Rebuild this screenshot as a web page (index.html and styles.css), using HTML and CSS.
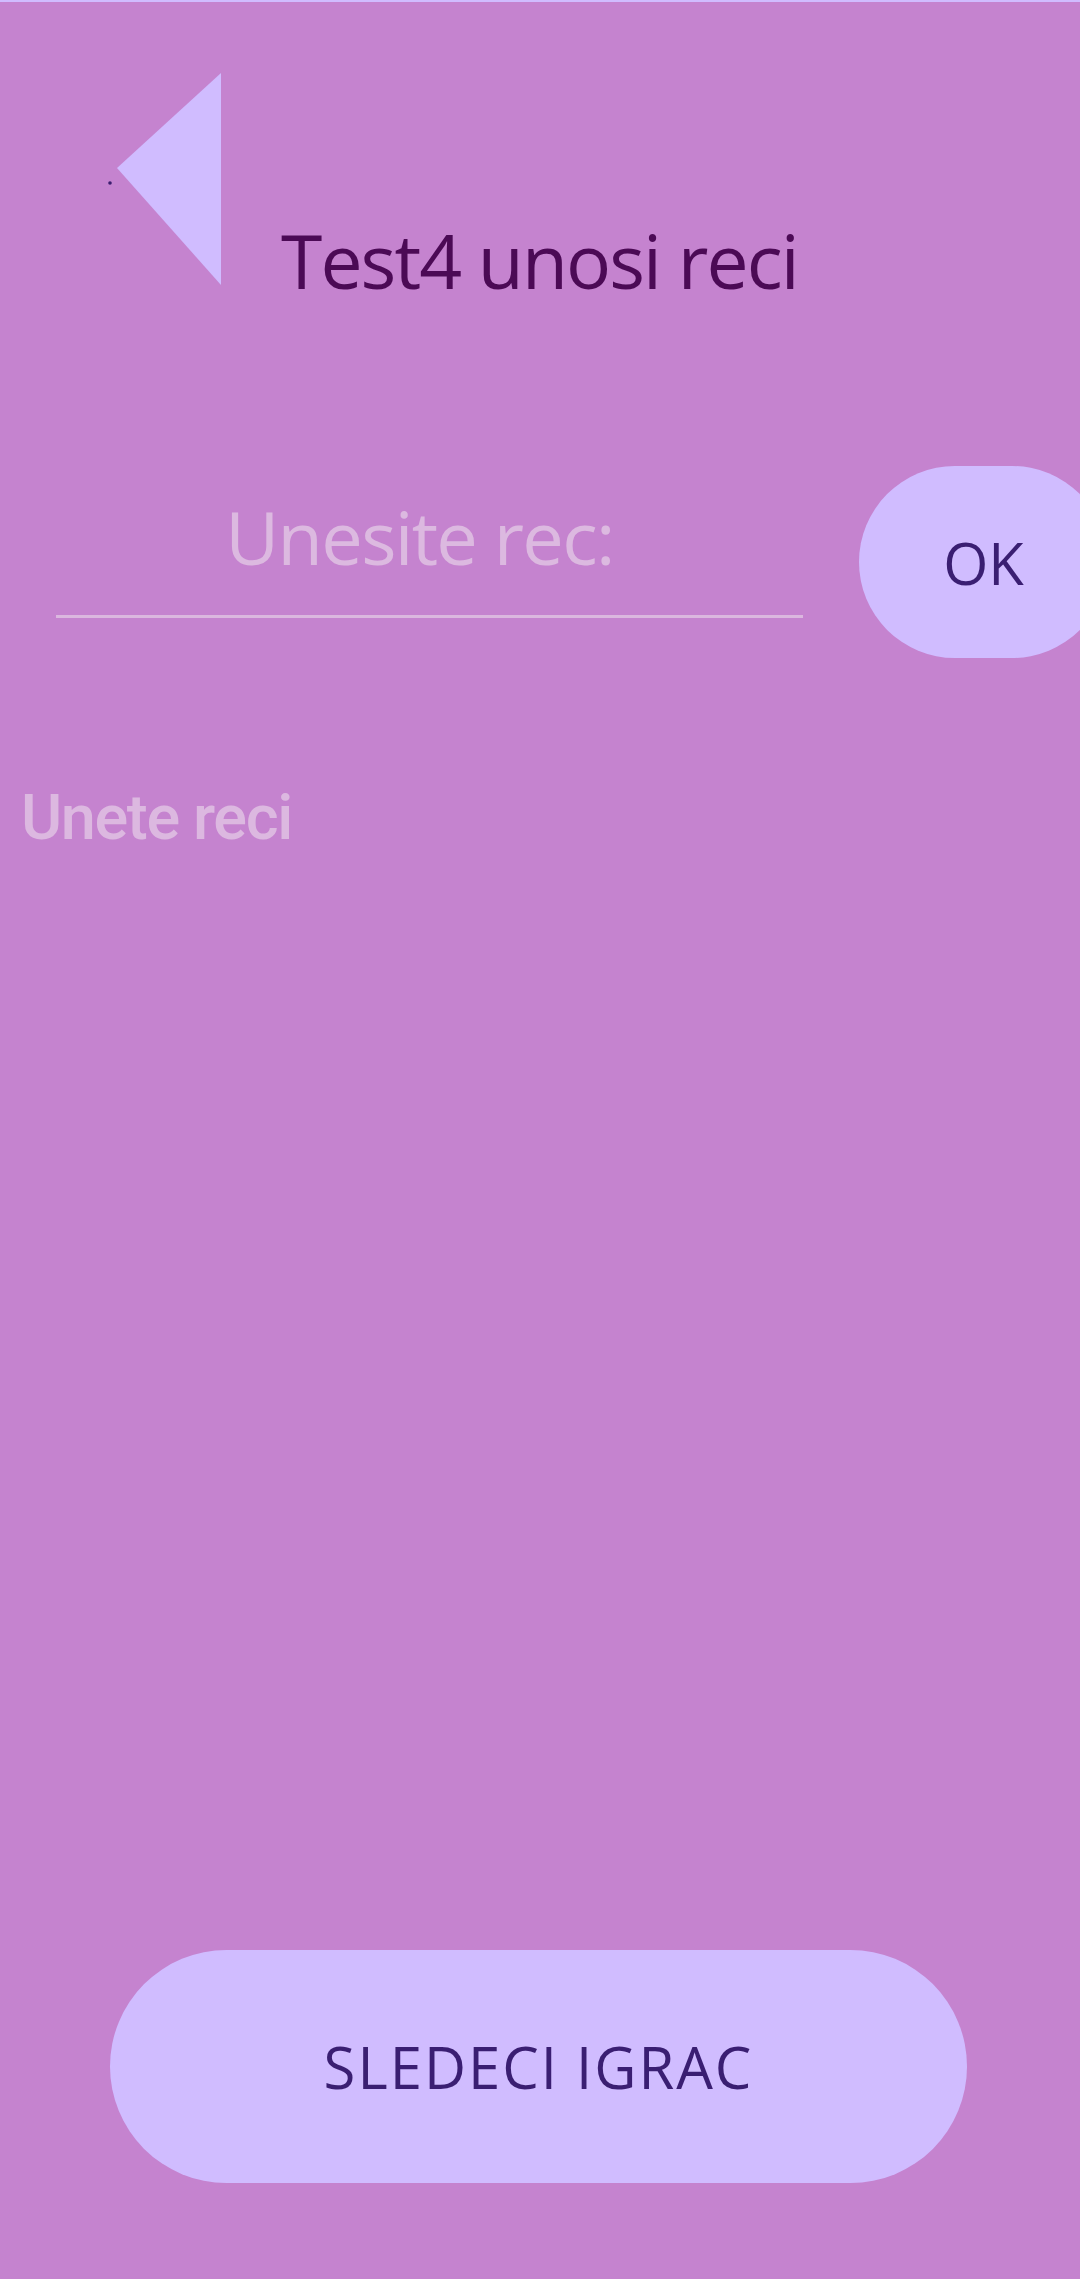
FILE: index.html
```html
<!DOCTYPE html>
<html lang="sr">
<head>
<meta charset="utf-8">
<title>Test4 unosi reci</title>
<link rel="stylesheet" href="styles.css">
</head>
<body>
<div class="screen">
  <div class="topline"></div>
  <header class="header">
    <button class="back" aria-label="Nazad">
      <svg width="115" height="212" viewBox="0 0 115 212">
        <polygon points="11,95 115,0 115,212" fill="#d0bcff"/>
        <circle cx="4" cy="110" r="1.8" fill="#3b1d6e"/>
      </svg>
    </button>
    <h1 class="title">Test4 unosi reci</h1>
  </header>
  <div class="entry">
    <input class="word" type="text" placeholder="Unesite rec:">
    <button class="ok">OK</button>
  </div>
  <h2 class="subtitle">Unete reci</h2>
  <button class="next">SLEDECI IGRAC</button>
</div>
</body>
</html>
```
FILE: styles.css
```css
html, body {
  margin: 0;
  padding: 0;
  background: #c583cf;
  overflow: hidden;
}
.screen {
  display: flex;
  flex-direction: column;
  min-height: 2279px;
  width: 1080px;
  overflow: hidden;
  font-family: "Open Sans", "Noto Sans", sans-serif;
}
.topline {
  height: 2px;
  background: #d0bcff;
}
.header {
  display: flex;
  align-items: flex-start;
  margin-top: 71px;
  height: 212px;
}
.back {
  margin: 0 0 0 106px;
  padding: 0;
  border: none;
  background: none;
  width: 115px;
  height: 212px;
  display: block;
}
.back svg { display: block; }
.title {
  margin: 150px 0 0 60px;
  font-size: 75px;
  line-height: 75px;
  font-weight: 400;
  letter-spacing: -1.9px;
  color: #4b0a55;
  white-space: nowrap;
}
.entry {
  display: flex;
  align-items: flex-start;
  margin-top: 181px;
  margin-left: 56px;
  gap: 56px;
}
.word {
  box-sizing: border-box;
  flex: none;
  width: 747px;
  height: 132px;
  margin-top: 20px;
  padding: 0 20px 28px 0;
  border: none;
  border-bottom: 3px solid #dbb7df;
  background: transparent;
  font-family: "Open Sans", "Noto Sans", sans-serif;
  font-size: 74px;
  letter-spacing: -1.7px;
  color: #4b0a55;
  text-align: center;
  outline: none;
}
.word::placeholder {
  color: #dcb9e0;
  opacity: 1;
}
.ok {
  flex: none;
  width: 249px;
  height: 192px;
  border: none;
  border-radius: 96px;
  background: #d0bcff;
  color: #3a1e72;
  font-family: "Open Sans", "Noto Sans", sans-serif;
  font-size: 58px;
  padding: 0;
}
.subtitle {
  margin: 128px 0 0 21px;
  font-family: Roboto, "Open Sans", sans-serif;
  font-size: 63px;
  line-height: 63px;
  font-weight: 500;
  letter-spacing: -1.4px;
  color: #dcb8e0;
}
.next {
  margin: auto 0 96px 110px;
  width: 857px;
  height: 233px;
  border: none;
  border-radius: 117px;
  background: #d0bcff;
  color: #3a1e72;
  font-family: "Open Sans", "Noto Sans", sans-serif;
  font-size: 58px;
  letter-spacing: 2px;
  padding: 0;
}
```
